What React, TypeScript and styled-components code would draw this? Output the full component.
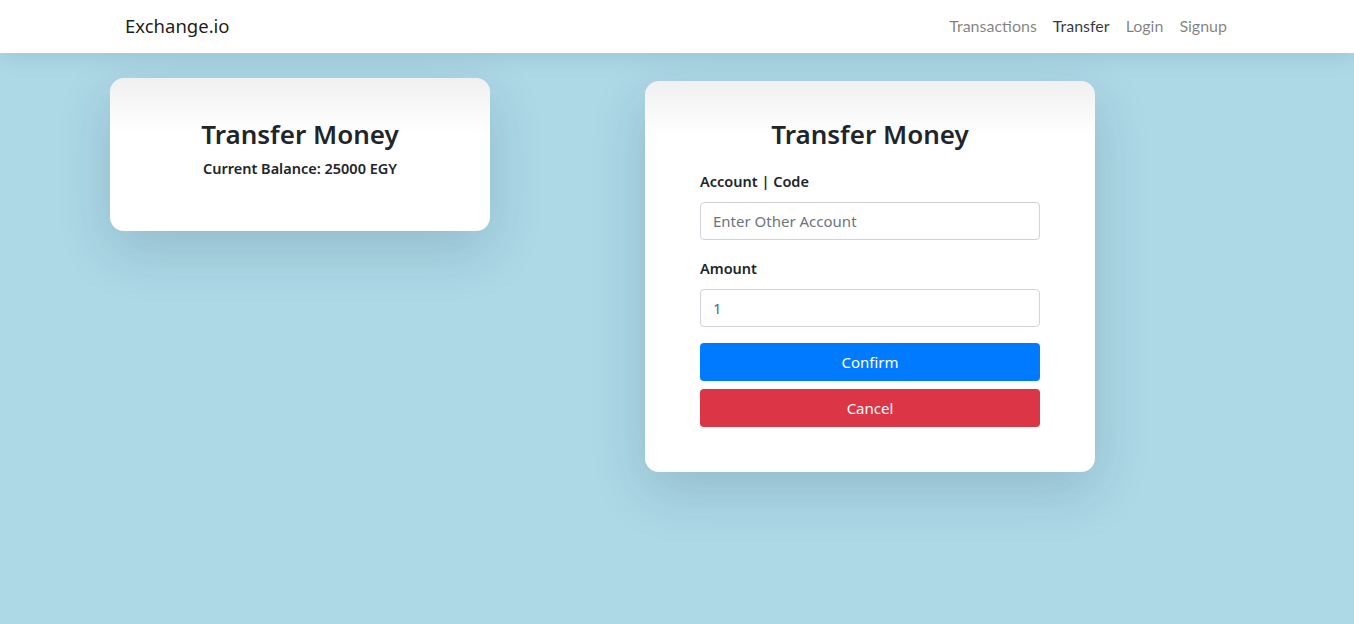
import styled, { createGlobalStyle } from "styled-components";

const GlobalStyle = createGlobalStyle`
    html, body {
        margin: 0;
        padding: 0;
        background-color: #add8e6;
        min-height: 100%;
    }
    body {
        font-family: "Noto Sans", "Open Sans", sans-serif;
        color: #212529;
    }
    * {
        box-sizing: border-box;
    }
`;

const Page = styled.div`
    min-height: 100vh;
    background-color: #add8e6;
`;

const NavBar = styled.nav`
    height: 53px;
    background-color: #fff;
    box-shadow: 0 2px 24px rgba(0, 0, 0, 0.1);
    position: relative;
    z-index: 1;
`;

const NavInner = styled.div`
    max-width: 1140px;
    height: 100%;
    margin: 0 auto;
    padding: 0 12px 2px 15px;
    display: flex;
    align-items: center;
    justify-content: space-between;
`;

const Brand = styled.a`
    font-size: 18.5px;
    color: rgba(0, 0, 0, 0.9);
    text-decoration: none;
    padding-left: 3px;
`;

const NavLinks = styled.div`
    display: flex;
    align-items: center;
`;

const NavLink = styled.a<{ $active?: boolean }>`
    font-family: "Lato", "Noto Sans", sans-serif;
    font-size: 16px;
    padding: 0 8px;
    text-decoration: none;
    color: ${(p) => (p.$active ? "rgba(0, 0, 0, 0.8)" : "rgba(0, 0, 0, 0.5)")};
`;

const Main = styled.main`
    display: flex;
    align-items: flex-start;
    padding-left: 110px;
    gap: 155px;
`;

const Card = styled.div<{ $width: number; $top: number }>`
    width: ${(p) => p.$width}px;
    margin-top: ${(p) => p.$top}px;
    background: linear-gradient(180deg, #f0f0f1 0px, #ffffff 55px);
    border-radius: 14px;
    box-shadow: 0 18px 55px rgba(0, 40, 60, 0.16);
    text-align: center;
`;

const BalanceCard = styled(Card)`
    padding: 39px 20px 54px;
`;

const FormCard = styled(Card)`
    padding: 36px 55px 45px;
    text-align: left;
`;

const Title = styled.h2`
    margin: 0;
    font-size: 26px;
    line-height: 34px;
    font-weight: 600;
    text-align: center;
    color: #212529;
`;

const Balance = styled.p`
    margin: 8px 0 0;
    font-size: 14.5px;
    line-height: 18px;
    font-weight: 600;
`;

const Form = styled.form`
    margin-top: 18px;
    display: flex;
    flex-direction: column;
`;

const Group = styled.div`
    margin-bottom: 16px;
`;

const Label = styled.label`
    display: block;
    font-size: 14.5px;
    line-height: 24px;
    font-weight: 600;
    margin-bottom: 9px;
`;

const Input = styled.input`
    display: block;
    width: 100%;
    height: 38px;
    padding: 6px 12px;
    font-family: "Noto Sans", sans-serif;
    font-size: 15px;
    color: #3a6f9e;
    background: #fff;
    border: 1px solid #ced4da;
    border-radius: 4px;
    outline: none;
    &::placeholder {
        color: #6c757d;
    }
`;

const Button = styled.button<{ $color: string }>`
    display: block;
    width: 100%;
    height: 38px;
    border: none;
    border-radius: 4px;
    background-color: ${(p) => p.$color};
    color: #fff;
    font-family: "Noto Sans", sans-serif;
    font-size: 15px;
    cursor: pointer;
    & + & {
        margin-top: 8px;
    }
`;

const App = () => {
    return (
        <>
            <GlobalStyle />
            <Page>
                <NavBar>
                    <NavInner>
                        <Brand href="#">Exchange.io</Brand>
                        <NavLinks>
                            <NavLink href="#">Transactions</NavLink>
                            <NavLink href="#" $active>
                                Transfer
                            </NavLink>
                            <NavLink href="#">Login</NavLink>
                            <NavLink href="#">Signup</NavLink>
                        </NavLinks>
                    </NavInner>
                </NavBar>
                <Main>
                    <BalanceCard $width={380} $top={25}>
                        <Title>Transfer Money</Title>
                        <Balance>Current Balance: 25000 EGY</Balance>
                    </BalanceCard>
                    <FormCard $width={450} $top={28}>
                        <Title>Transfer Money</Title>
                        <Form onSubmit={(e) => e.preventDefault()}>
                            <Group>
                                <Label>Account | Code</Label>
                                <Input placeholder="Enter Other Account" />
                            </Group>
                            <Group>
                                <Label>Amount</Label>
                                <Input type="number" defaultValue={1} />
                            </Group>
                            <Button type="submit" $color="#007bff">
                                Confirm
                            </Button>
                            <Button type="button" $color="#dc3545">
                                Cancel
                            </Button>
                        </Form>
                    </FormCard>
                </Main>
            </Page>
        </>
    );
};

export default App;
